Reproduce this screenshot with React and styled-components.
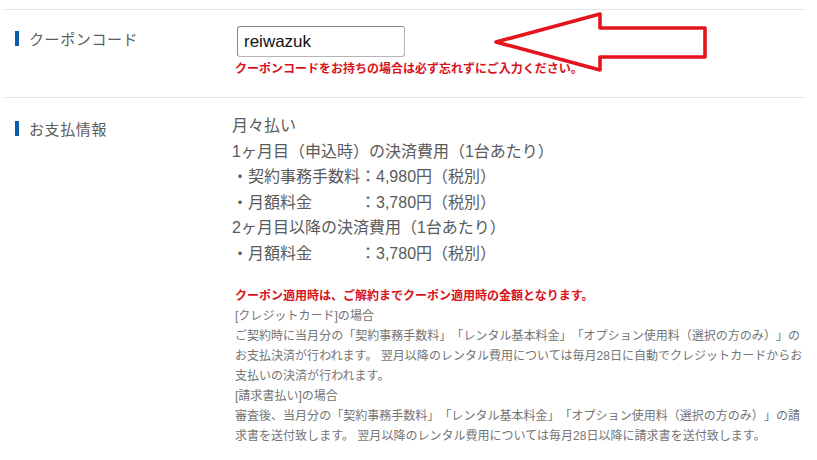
import styled, { createGlobalStyle } from "styled-components";

const GlobalStyle = createGlobalStyle`
  body {
    margin: 0;
    background: #ffffff;
    font-family: "Liberation Sans", "Noto Sans CJK JP", sans-serif;
    text-spacing-trim: space-all;
  }
`;

const Page = styled.div`
  position: relative;
  width: 817px;
  height: 460px;
  overflow: hidden;
  padding-top: 9px;
  box-sizing: border-box;
`;

const Table = styled.div`
  margin-left: 4px;
  width: 801px;
`;

const Row = styled.div`
  display: grid;
  grid-template-columns: 228px 1fr;
  border-top: 1px solid #e6e6e6;
  padding: ${(p) => p.pad};
`;

const Label = styled.div`
  display: flex;
  align-items: center;
  gap: 10px;
  padding-left: 11px;
  margin-top: ${(p) => p.top};
  height: 18px;
  font-size: 15px;
  color: #5c5c5c;
  letter-spacing: 0.6px;
  &::before {
    content: "";
    display: block;
    width: 4px;
    height: 15px;
    background: #0b5ca9;
  }
`;

const Field = styled.div`
  display: flex;
  flex-direction: column;
  align-items: flex-start;
`;

const CodeInput = styled.input`
  width: 168px;
  height: 31px;
  box-sizing: border-box;
  margin-left: 5px;
  padding: 0 6px;
  border: 1px solid #b4b4b4;
  border-top-color: #8a8a8a;
  border-left-color: #8a8a8a;
  border-radius: 3px;
  font-family: "Liberation Sans", sans-serif;
  font-size: 17px;
  color: #111111;
  outline: none;
`;

const Notice = styled.p`
  margin: ${(p) => p.m || "0"};
  padding-left: 3px;
  font-size: 12px;
  line-height: 20px;
  font-weight: bold;
  color: #d9121c;
`;

const Plan = styled.div`
  display: flex;
  flex-direction: column;
`;

const PlanLine = styled.div`
  font-size: 16px;
  line-height: 25.5px;
  color: #5a5a5a;
`;

const Small = styled.p`
  margin: 0;
  padding-left: 3px;
  white-space: nowrap;
  font-size: 12px;
  line-height: 20px;
  letter-spacing: 0.02px;
  color: #747474;
`;

const Arrow = styled.svg`
  position: absolute;
  left: 488px;
  top: 8px;
`;

export default function App() {
  return (
    <>
      <GlobalStyle />
      <Page>
        <Table>
          <Row pad="16px 0 18px">
            <Label top="3px">クーポンコード</Label>
            <Field>
              <CodeInput type="text" defaultValue="reiwazuk" />
              <Notice m="2px 0 0">
                クーポンコードをお持ちの場合は必ず忘れずにご入力ください。
              </Notice>
            </Field>
          </Row>
          <Row pad="15px 0 10px">
            <Label top="6px">お支払情報</Label>
            <Field>
              <Plan>
                <PlanLine>月々払い</PlanLine>
                <PlanLine>1ヶ月目（申込時）の決済費用（1台あたり）</PlanLine>
                <PlanLine>・契約事務手数料：4,980円（税別）</PlanLine>
                <PlanLine>・月額料金　　　：3,780円（税別）</PlanLine>
                <PlanLine>2ヶ月目以降の決済費用（1台あたり）</PlanLine>
                <PlanLine>・月額料金　　　：3,780円（税別）</PlanLine>
              </Plan>
              <Notice m="20px 0 0">
                クーポン適用時は、ご解約までクーポン適用時の金額となります。
              </Notice>
              <Small>[クレジットカード]の場合</Small>
              <Small>
                ご契約時に当月分の「契約事務手数料」「レンタル基本料金」「オプション使用料（選択の方のみ）」の
                <br />
                お支払決済が行われます。 翌月以降のレンタル費用については毎月28日に自動でクレジットカードからお
                <br />
                支払いの決済が行われます。
              </Small>
              <Small>[請求書払い]の場合</Small>
              <Small>
                審査後、当月分の「契約事務手数料」「レンタル基本料金」「オプション使用料（選択の方のみ）」の請
                <br />
                求書を送付致します。 翌月以降のレンタル費用については毎月28日以降に請求書を送付致します。
              </Small>
            </Field>
          </Row>
        </Table>
        <Arrow width="224" height="70" viewBox="0 0 224 70">
          <polygon
            points="8,34 112,6 112,20 217,20 217,49 112,49 112,62"
            fill="none"
            stroke="#e3141c"
            strokeWidth="3.6"
            strokeLinejoin="round"
          />
        </Arrow>
      </Page>
    </>
  );
}
